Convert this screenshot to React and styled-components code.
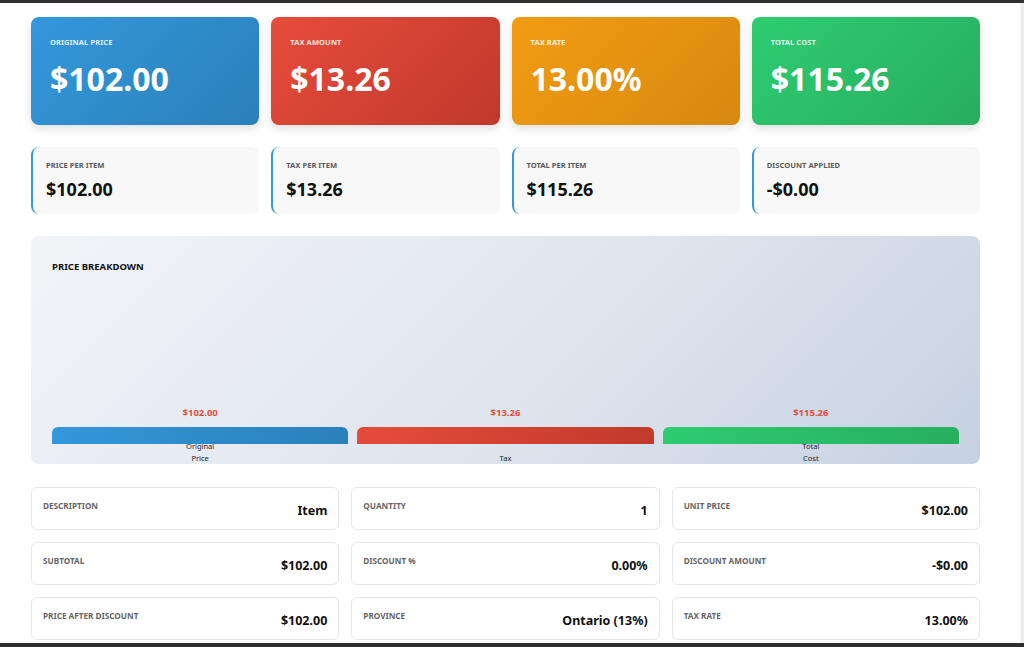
import React from "react";
import styled, { createGlobalStyle } from "styled-components";

const GlobalStyle = createGlobalStyle`
  html, body {
    margin: 0;
    padding: 0;
    background: #ffffff;
  }
  body {
    font-family: "Noto Sans", "Open Sans", Arial, sans-serif;
    color: #111;
  }
  * { box-sizing: border-box; }
`;

const Frame = styled.div`
  width: 1024px;
  height: 647px;
  display: flex;
  flex-direction: column;
  overflow: hidden;
  background: #fff;
`;

const Edge = styled.div`
  height: ${(p) => p.h}px;
  background: #2f2f2f;
  flex-shrink: 0;
`;

const Body = styled.div`
  flex: 1;
  display: flex;
  min-height: 0;
`;

const Main = styled.main`
  flex: 1;
  padding: 14px 40px 0 31px;
  display: flex;
  flex-direction: column;
  gap: 22px;
  overflow: hidden;
`;

const ScrollStrip = styled.div`
  width: 4px;
  background: #ececec;
  border-left: 1px solid #f4f4f4;
`;

const Row = styled.div`
  display: grid;
  grid-template-columns: repeat(${(p) => p.cols}, 1fr);
  gap: ${(p) => p.gap || 12}px;
  margin-top: ${(p) => p.offset || 0}px;
`;

const HeroCard = styled.div`
  height: 108px;
  border-radius: 8px;
  padding: 20px 19px;
  color: #fff;
  background: linear-gradient(135deg, ${(p) => p.from}, ${(p) => p.to});
  box-shadow: 0 4px 10px rgba(0, 0, 0, 0.12);
`;

const HeroLabel = styled.div`
  font-size: 7.5px;
  font-weight: 700;
  text-transform: uppercase;
  opacity: 0.85;
  letter-spacing: 0.1px;
`;

const HeroValue = styled.div`
  font-size: 32px;
  font-weight: 700;
  margin-top: 12px;
  line-height: 40px;
`;

const StatCard = styled.div`
  height: 67px;
  border-radius: 8px;
  background: #f8f8f9;
  border-left: 2px solid #3498db;
  padding: 13px 13px;
`;

const StatLabel = styled.div`
  font-size: 7.6px;
  font-weight: 700;
  color: #5a5a5a;
  text-transform: uppercase;
`;

const StatValue = styled.div`
  font-size: 18px;
  font-weight: 700;
  color: #111;
  margin-top: 7px;
  line-height: 24px;
`;

const Breakdown = styled.section`
  height: 228px;
  border-radius: 8px;
  background: linear-gradient(135deg, #f2f4f8 0%, #dfe5ee 55%, #c6d1e2 100%);
  padding: 24px 21px 0 21px;
  display: flex;
  flex-direction: column;
`;

const SectionTitle = styled.h3`
  margin: 0;
  font-size: 9.5px;
  font-weight: 700;
  color: #111;
  text-transform: uppercase;
`;

const Bars = styled.div`
  flex: 1;
  display: grid;
  grid-template-columns: repeat(3, 1fr);
  gap: 9px;
  align-items: end;
`;

const BarCol = styled.div`
  display: flex;
  flex-direction: column;
  align-items: center;
`;

const BarAmount = styled.div`
  font-size: 9.5px;
  font-weight: 700;
  color: #e74c3c;
  margin-bottom: 8px;
`;

const Bar = styled.div`
  width: 100%;
  height: 17px;
  border-radius: 6px 6px 0 0;
  background: linear-gradient(135deg, ${(p) => p.from}, ${(p) => p.to});
`;

const BarLabel = styled.div`
  width: 32px;
  text-align: center;
  font-size: 7.5px;
  line-height: 12px;
  color: #222;
  margin-top: -4px;
  height: 24px;
  display: flex;
  align-items: flex-end;
  justify-content: center;
`;

const InfoCard = styled.div`
  height: 43px;
  border: 1px solid #e6e6e6;
  border-radius: 6px;
  padding: 11px 11px 0 11px;
  display: flex;
  justify-content: space-between;
  align-items: flex-start;
  background: #fff;
`;

const InfoLabel = styled.div`
  font-size: 8.2px;
  font-weight: 700;
  color: #666;
  text-transform: uppercase;
  margin-top: 1px;
`;

const InfoValue = styled.div`
  font-size: 12.5px;
  font-weight: 700;
  color: #111;
  margin-top: 3px;
`;

const heroes = [
  { label: "Original Price", value: "$102.00", from: "#3498db", to: "#2a80b9" },
  { label: "Tax Amount", value: "$13.26", from: "#e74c3c", to: "#c0392b" },
  { label: "Tax Rate", value: "13.00%", from: "#f39c12", to: "#d68910" },
  { label: "Total Cost", value: "$115.26", from: "#2ecc71", to: "#27ae60" },
];

const stats = [
  { label: "Price Per Item", value: "$102.00" },
  { label: "Tax Per Item", value: "$13.26" },
  { label: "Total Per Item", value: "$115.26" },
  { label: "Discount Applied", value: "-$0.00" },
];

const bars = [
  { amount: "$102.00", label: "Original Price", from: "#3498db", to: "#2a80b9" },
  { amount: "$13.26", label: "Tax", from: "#e74c3c", to: "#c0392b" },
  { amount: "$115.26", label: "Total Cost", from: "#2ecc71", to: "#27ae60" },
];

const details = [
  { label: "Description", value: "Item" },
  { label: "Quantity", value: "1" },
  { label: "Unit Price", value: "$102.00" },
  { label: "Subtotal", value: "$102.00" },
  { label: "Discount %", value: "0.00%" },
  { label: "Discount Amount", value: "-$0.00" },
  { label: "Price After Discount", value: "$102.00" },
  { label: "Province", value: "Ontario (13%)" },
  { label: "Tax Rate", value: "13.00%" },
];

export default function App() {
  return (
    <>
      <GlobalStyle />
      <Frame>
        <Edge h={3} />
        <Body>
          <Main>
            <Row cols={4}>
              {heroes.map((h) => (
                <HeroCard key={h.label} from={h.from} to={h.to}>
                  <HeroLabel>{h.label}</HeroLabel>
                  <HeroValue>{h.value}</HeroValue>
                </HeroCard>
              ))}
            </Row>
            <Row cols={4}>
              {stats.map((s) => (
                <StatCard key={s.label}>
                  <StatLabel>{s.label}</StatLabel>
                  <StatValue>{s.value}</StatValue>
                </StatCard>
              ))}
            </Row>
            <Breakdown>
              <SectionTitle>Price Breakdown</SectionTitle>
              <Bars>
                {bars.map((b) => (
                  <BarCol key={b.label}>
                    <BarAmount>{b.amount}</BarAmount>
                    <Bar from={b.from} to={b.to} />
                    <BarLabel>{b.label}</BarLabel>
                  </BarCol>
                ))}
              </Bars>
            </Breakdown>
            <Row cols={3} offset={1}>
              {details.map((d) => (
                <InfoCard key={d.label}>
                  <InfoLabel>{d.label}</InfoLabel>
                  <InfoValue>{d.value}</InfoValue>
                </InfoCard>
              ))}
            </Row>
          </Main>
          <ScrollStrip />
        </Body>
        <Edge h={4} />
      </Frame>
    </>
  );
}
